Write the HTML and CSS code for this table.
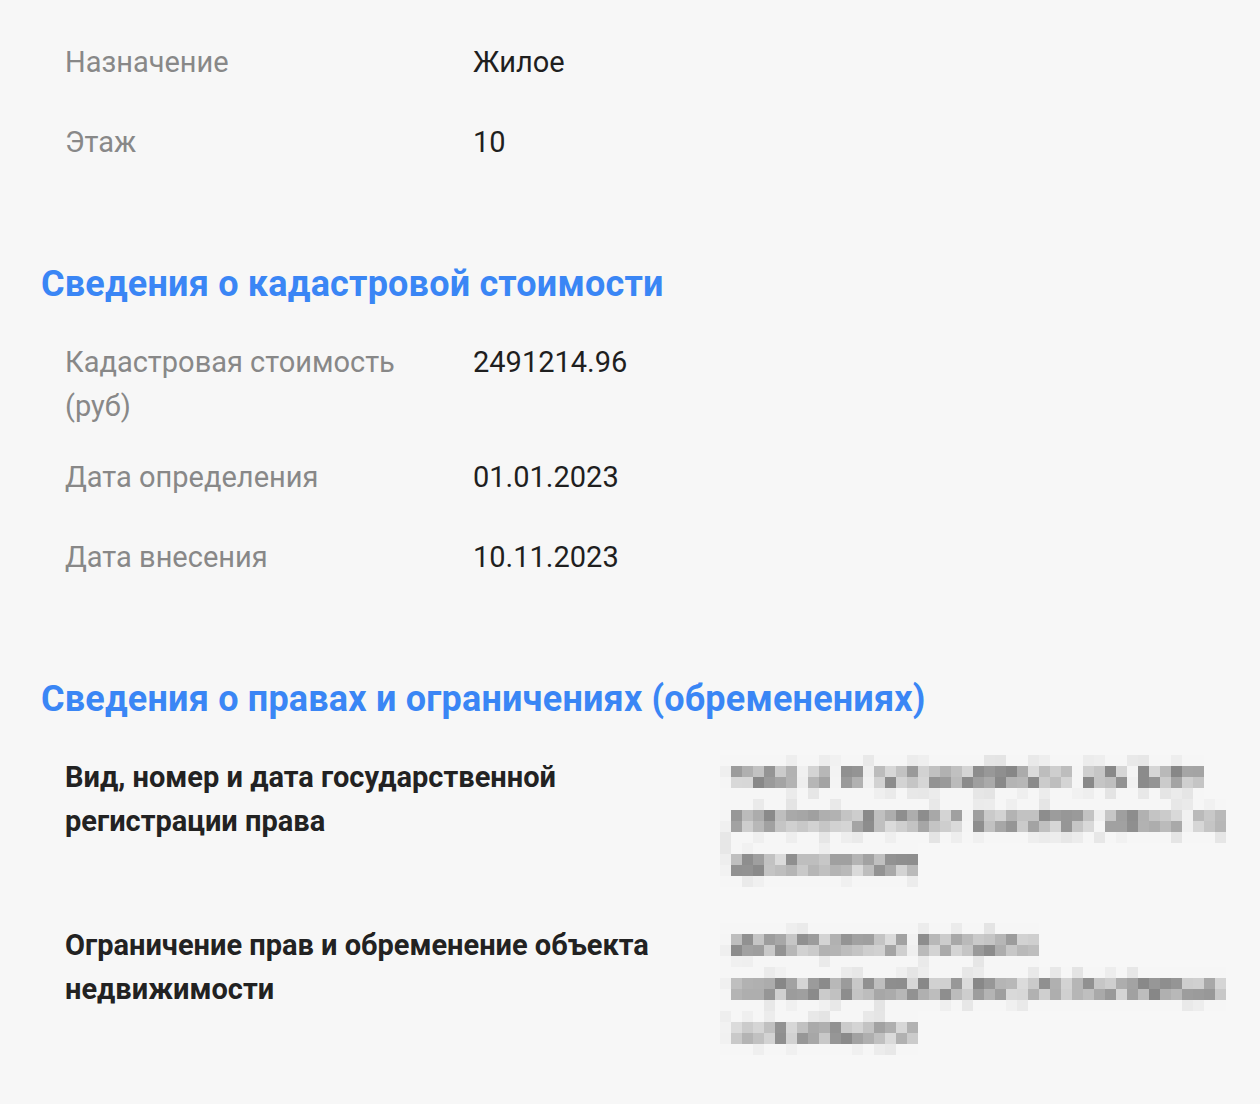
FILE: index.html
```html
<!DOCTYPE html>
<html lang="ru">
<head>
  <meta charset="UTF-8" />
  <meta name="viewport" content="width=device-width, initial-scale=1.0" />
  <title>Сведения об объекте</title>
  <link rel="stylesheet" href="styles.css">
</head>
<body>
  <div class="page">
    <div class="group">
      <div class="row"><div class="label">Назначение</div><div class="value">Жилое</div></div>
      <div class="row"><div class="label">Этаж</div><div class="value">10</div></div>
    </div>

    <h2 class="title">Сведения о кадастровой стоимости</h2>
    <div class="group">
      <div class="row row-wrap"><div class="label">Кадастровая стоимость (руб)</div><div class="value">2491214.96</div></div>
      <div class="row"><div class="label">Дата определения</div><div class="value">01.01.2023</div></div>
      <div class="row"><div class="label">Дата внесения</div><div class="value">10.11.2023</div></div>
    </div>

    <h2 class="title">Сведения о правах и ограничениях (обременениях)</h2>
    <div class="group rights">
      <div class="row">
        <div class="label">Вид, номер и дата государственной регистрации права</div>
        <div class="value hidden-value">
          <canvas class="mosaic" data-cells="44" data-seed="3"></canvas>
          <canvas class="mosaic" data-cells="46" data-seed="11"></canvas>
          <canvas class="mosaic" data-cells="18" data-seed="27"></canvas>
        </div>
      </div>
      <div class="row">
        <div class="label">Ограничение прав и обременение объекта недвижимости</div>
        <div class="value hidden-value">
          <canvas class="mosaic" data-cells="29" data-seed="41"></canvas>
          <canvas class="mosaic" data-cells="46" data-seed="57"></canvas>
          <canvas class="mosaic" data-cells="18" data-seed="73"></canvas>
        </div>
      </div>
    </div>
  </div>

  <script>
  // скрытые данные рисуем мозаикой
  function rnd(seed) {
    let s = seed;
    return () => {
      s = (s * 9301 + 49297) % 233280;
      return s / 233280;
    };
  }

  document.querySelectorAll(".mosaic").forEach(cv => {
    const cells = +cv.dataset.cells;
    const r = rnd(+cv.dataset.seed);
    const size = 11;
    cv.width = cells * size;
    cv.height = 44;
    const ctx = cv.getContext("2d");
    for (let c = 0; c < cells; c++) {
      const gap = c > 2 && c < cells - 2 && r() < 0.06;
      for (let row = 0; row < 4; row++) {
        let g;
        if (row === 0 || row === 3) {
          g = r() < 0.3 ? 228 + Math.floor(r() * 14) : 246;
        } else if (gap || c === 0) {
          g = 238 + Math.floor(r() * 8);
        } else {
          g = 135 + Math.floor(r() * 85);
        }
        ctx.fillStyle = `rgb(${g},${g},${g})`;
        ctx.fillRect(c * size, row * size, size, size);
      }
    }
  });
  </script>
</body>
</html>
```

FILE: styles.css
```css
body {
  margin: 0;
  background: #f7f7f7;
  font-family: Roboto, 'Noto Sans', sans-serif;
  color: #1f1f1f;
}
.page {
  padding: 40px 41px 40px;
}
.group {
  display: flex;
  flex-direction: column;
  gap: 36px;
  padding-left: 24px;
}
.row {
  display: flex;
  font-size: 29px;
  line-height: 44px;
}
.row-wrap {
  margin-bottom: -9px;
}
.label {
  width: 380px;
  margin-right: 28px;
  color: #888;
  flex-shrink: 0;
}
.value {
  color: #1f1f1f;
}
.title {
  margin: 98px 0 34px;
  font-size: 36px;
  line-height: 44px;
  letter-spacing: 0.2px;
  font-weight: 700;
  color: #3a86f5;
}
.rights .label {
  width: 620px;
  margin-right: 35px;
  color: #222;
  font-weight: 700;
}
.hidden-value {
  display: flex;
  flex-direction: column;
  align-items: flex-start;
}
.mosaic {
  display: block;
  height: 44px;
}
```
